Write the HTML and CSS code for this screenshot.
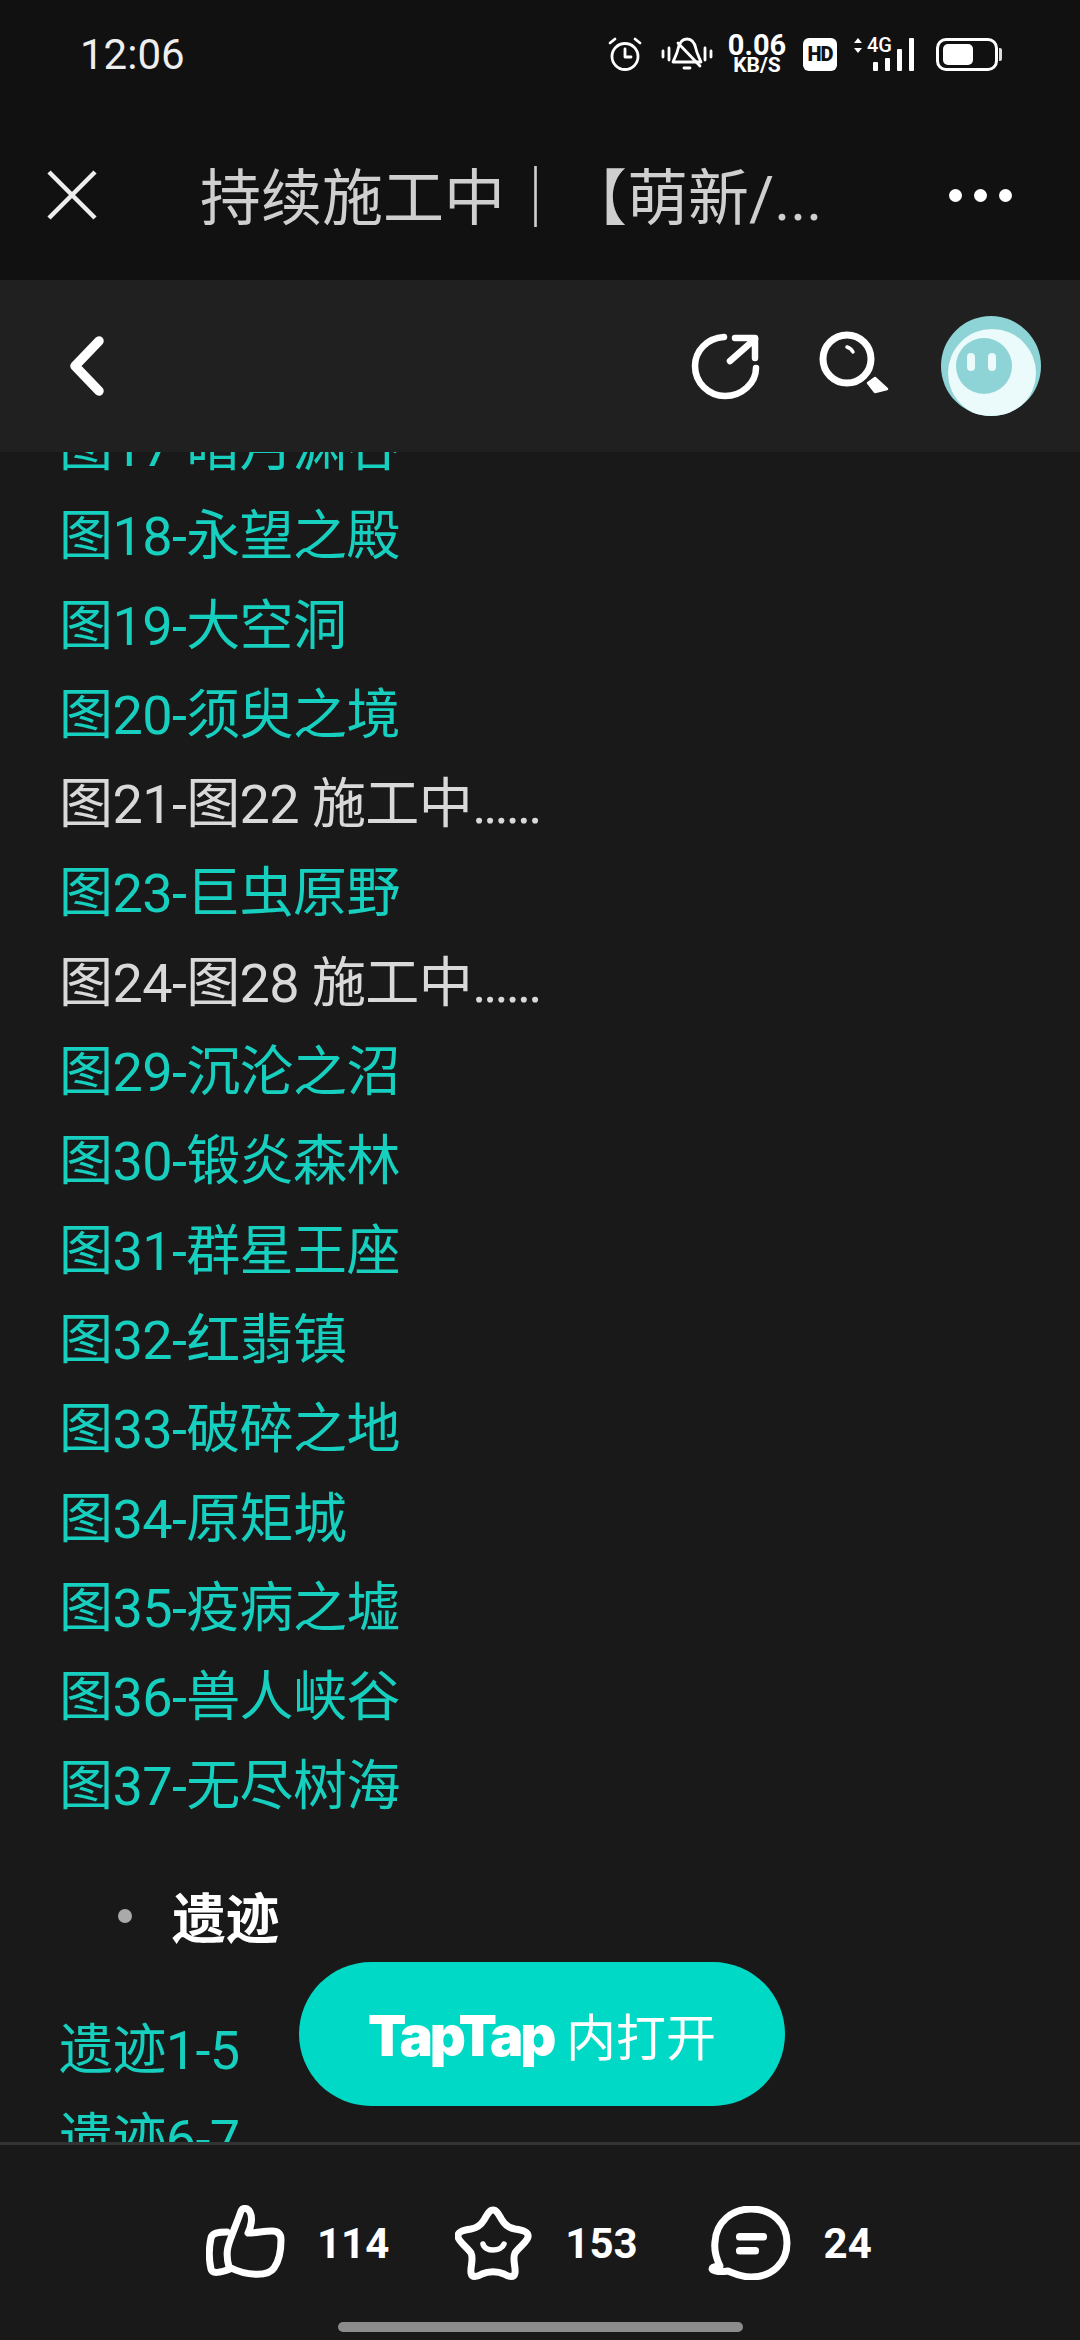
FILE: index.html
```html
<!DOCTYPE html>
<html lang="zh-CN">
<head>
    <meta charset="UTF-8">
    <meta name="viewport" content="width=device-width, initial-scale=1.0">
    <title>TapTap</title>
    <link rel="stylesheet" href="styles.css">
</head>
<body>
<div class="app">
    <header class="chrome">
        <div class="status-bar">
            <span class="clock">12:06</span>
            <div class="status-icons">
                <svg class="ic-alarm" viewBox="0 0 34 34" fill="none" stroke="#fff" stroke-width="2.8" stroke-linecap="round" stroke-linejoin="round">
                    <circle cx="17" cy="19.5" r="13"/>
                    <path d="M17 12v8h6"/>
                    <path d="M2 6l5-4M32 6l-5-4"/>
                </svg>
                <svg class="ic-bell" viewBox="0 0 52 36" fill="none" stroke="#fff" stroke-width="2.8" stroke-linecap="round" stroke-linejoin="round">
                    <path d="M26 3c-6 0-8 5-9 10-1 5-3 8-5 13h28c-2-5-4-8-5-13-1-5-3-10-9-10z"/>
                    <path d="M23 32h6"/>
                    <path d="M17 7l22 23"/>
                    <path d="M2 15v6M8 12v12M44 12v12M50 15v6"/>
                </svg>
                <div class="net-speed">
                    <span class="net-value">0.06</span>
                    <span class="net-unit">KB/S</span>
                </div>
                <span class="hd-badge">HD</span>
                <div class="signal">
                    <svg class="ic-arrows" viewBox="0 0 10 15" fill="#fff">
                        <path d="M5 0l4 5H1zM5 15l-4-5h8z"/>
                    </svg>
                    <span class="net-type">4G</span>
                    <div class="bars">
                        <i class="bar bar-1"></i>
                        <i class="bar bar-2"></i>
                        <i class="bar bar-3"></i>
                        <i class="bar bar-4"></i>
                    </div>
                </div>
                <div class="battery">
                    <div class="battery-body"><div class="battery-fill"></div></div>
                    <div class="battery-tip"></div>
                </div>
            </div>
        </div>
        <div class="title-bar">
            <svg class="ic-close" viewBox="0 0 50 50" stroke="#eee" stroke-width="4.5">
                <path d="M2 2l46 46M48 2L2 48"/>
            </svg>
            <h1 class="page-title">持续施工中｜【萌新/...</h1>
            <div class="more">
                <i class="dot"></i><i class="dot"></i><i class="dot"></i>
            </div>
        </div>
    </header>

    <nav class="sub-bar">
        <svg class="ic-back" viewBox="0 0 36 62" fill="none" stroke="#fff" stroke-width="9.5" stroke-linecap="round" stroke-linejoin="round">
            <path d="M30 6L6 31l24 25"/>
        </svg>
        <div class="sub-actions">
            <svg class="ic-share" viewBox="0 0 70 68" fill="none" stroke="#fff" stroke-width="6.5" stroke-linecap="round" stroke-linejoin="round">
                <path d="M33 5C16 6 4 19 4 34c0 17 14 30 30 30 17 0 31-13 31-28"/>
                <path d="M39 29L64 7"/>
                <path d="M44 6h20v20"/>
            </svg>
            <svg class="ic-search" viewBox="0 0 72 70" fill="none" stroke="#fff" stroke-linecap="round" stroke-linejoin="round">
                <circle cx="28" cy="28" r="24" stroke-width="7"/>
                <path d="M28 16c3 1 5 3 6 5" stroke-width="3.5"/>
                <path d="M49 52l7 9 12-3-12-11z" fill="#fff" stroke-width="2.5"/>
            </svg>
            <svg class="ic-avatar" viewBox="0 0 100 100">
                <defs>
                    <clipPath id="avatarClip"><circle cx="50" cy="50" r="50"/></clipPath>
                </defs>
                <g clip-path="url(#avatarClip)">
                    <rect width="100" height="100" fill="#8ed3d6"/>
                    <circle cx="51" cy="57" r="44" fill="#ebfafa"/>
                    <circle cx="43" cy="50" r="28" fill="#8ed3d6"/>
                    <rect x="26" y="37" width="8" height="18" rx="4" fill="#ebfafa"/>
                    <rect x="47" y="37" width="8" height="18" rx="4" fill="#ebfafa"/>
                </g>
            </svg>
        </div>
    </nav>

    <main class="content">
        <div class="scroll-inner">
            <ul class="map-list">
                <li><a href="#">图17-暗月渊谷</a></li>
                <li><a href="#">图18-永望之殿</a></li>
                <li><a href="#">图19-大空洞</a></li>
                <li><a href="#">图20-须臾之境</a></li>
                <li>图21-图22 施工中<span class="dots">......</span></li>
                <li><a href="#">图23-巨虫原野</a></li>
                <li>图24-图28 施工中<span class="dots">......</span></li>
                <li><a href="#">图29-沉沦之沼</a></li>
                <li><a href="#">图30-锻炎森林</a></li>
                <li><a href="#">图31-群星王座</a></li>
                <li><a href="#">图32-红翡镇</a></li>
                <li><a href="#">图33-破碎之地</a></li>
                <li><a href="#">图34-原矩城</a></li>
                <li><a href="#">图35-疫病之墟</a></li>
                <li><a href="#">图36-兽人峡谷</a></li>
                <li><a href="#">图37-无尽树海</a></li>
            </ul>
            <div class="section-head">
                <i class="bullet"></i>
                <strong>遗迹</strong>
            </div>
            <ul class="map-list">
                <li><a href="#">遗迹1-5</a></li>
                <li><a href="#">遗迹6-7</a></li>
            </ul>
        </div>
        <button class="open-app"><span class="brand">TapTap</span> 内打开</button>
    </main>

    <footer class="action-bar">
        <div class="stats">
            <div class="stat stat-like">
                <svg class="ic-stat" viewBox="0 0 80 76" fill="none" stroke="#fff" stroke-width="7" stroke-linecap="round" stroke-linejoin="round">
                    <path d="M23 62C19 48 22 40 26 30c3-8 7-18 9-24 2-4 7-3 9 1 3 6 1 15-2 21 8 0 16-2 24-2 6 0 9 3 9 9 0 10-2 21-7 28-6 9-28 8-45-1z"/>
                    <path d="M21 27c-9 0-15 1-16 6-2 9-2 22 0 31 1 5 9 4 19 0"/>
                </svg>
                <span class="stat-num">114</span>
            </div>
            <div class="stat stat-star">
                <svg class="ic-stat" viewBox="0 0 77 76" fill="none" stroke="#fff" stroke-width="7" stroke-linecap="round" stroke-linejoin="round">
                    <path d="M38 5c4 0 6 5 9 10s7 8 13 9c8 1 14 3 13 8s-9 10-13 16c-3 6 1 14 0 20-1 5-6 4-11 1-6-3-16-3-22 0-5 3-10 4-11-1-1-6 3-14 0-20-4-6-12-11-13-16s5-7 13-8c6-1 10-4 13-9s5-10 9-10z"/>
                    <path d="M28 39c2 8 18 8 21 0" stroke-width="5.5"/>
                </svg>
                <span class="stat-num">153</span>
            </div>
            <div class="stat stat-comment">
                <svg class="ic-stat" viewBox="0 0 83 74" fill="none" stroke="#fff" stroke-width="7" stroke-linecap="round" stroke-linejoin="round">
                    <path d="M12 60C7 50 6 44 7 36 8 16 24 3 43 3c21 0 36 14 36 34S64 71 43 71c-10 0-16-3-23-6-6 1-15 1-16-2 0-2 4-3 8-3z"/>
                    <rect x="28" y="27" width="31" height="7.5" rx="3.5" fill="#fff" stroke="none"/>
                    <rect x="28" y="41" width="23" height="7.5" rx="3.5" fill="#fff" stroke="none"/>
                </svg>
                <span class="stat-num">24</span>
            </div>
        </div>
        <div class="home-indicator"></div>
    </footer>
</div>
</body>
</html>
```

FILE: styles.css
```css
* {
    box-sizing: border-box;
}
body {
    margin: 0;
    padding: 0;
    background-color: #191919;
    font-family: Roboto, "Noto Sans CJK SC", sans-serif;
}
ul {
    list-style: none;
    margin: 0;
    padding: 0;
}
a {
    color: inherit;
    text-decoration: none;
}
svg {
    display: block;
    flex: none;
}

.app {
    width: 1080px;
    height: 2340px;
    display: flex;
    flex-direction: column;
    overflow: hidden;
}

/* top chrome */
.chrome {
    height: 280px;
    background-color: #111;
    color: #fff;
}
.status-bar {
    height: 110px;
    display: flex;
    align-items: center;
    justify-content: space-between;
    padding: 0 78px 2px 80px;
}
.clock {
    font-size: 42px;
    color: #eee;
}
.status-icons {
    display: flex;
    align-items: center;
}
.ic-alarm {
    width: 34px;
    height: 34px;
    margin-right: 19px;
}
.ic-bell {
    width: 52px;
    height: 36px;
    margin-right: 12px;
}
.net-speed {
    width: 64px;
    display: flex;
    flex-direction: column;
    align-items: center;
    color: #fff;
    font-weight: 700;
    margin-right: 14px;
}
.net-value {
    font-size: 29px;
    line-height: 23px;
}
.net-unit {
    font-size: 21px;
    line-height: 17px;
}
.hd-badge {
    width: 34px;
    height: 33px;
    background-color: #fff;
    border-radius: 6px;
    color: #111;
    font-size: 20px;
    font-weight: 900;
    line-height: 33px;
    text-align: center;
    letter-spacing: -1px;
    margin-right: 16px;
}
.signal {
    width: 62px;
    height: 34px;
    display: flex;
    align-items: flex-start;
    position: relative;
    margin-right: 21px;
}
.ic-arrows {
    width: 10px;
    height: 15px;
    margin-top: 1px;
}
.net-type {
    font-size: 20px;
    line-height: 17px;
    font-weight: 500;
    margin-left: 4px;
}
.bars {
    position: absolute;
    left: 20px;
    bottom: 0;
    display: flex;
    align-items: flex-end;
    gap: 7px;
}
.bar {
    width: 5px;
    background-color: #fff;
    border-radius: 1px;
}
.bar-1 { height: 9px; }
.bar-2 { height: 13px; }
.bar-3 { height: 22px; }
.bar-4 { height: 33px; }
.battery {
    display: flex;
    align-items: center;
}
.battery-body {
    width: 62px;
    height: 33px;
    border: 3px solid #fff;
    border-radius: 10px;
    padding: 3px 4px;
}
.battery-fill {
    width: 30px;
    height: 100%;
    background-color: #fff;
    border-radius: 5px;
}
.battery-tip {
    width: 3px;
    height: 13px;
    margin-left: 1px;
    background-color: #ddd;
    border-radius: 0 2px 2px 0;
}

.title-bar {
    height: 170px;
    display: flex;
    align-items: center;
    padding: 0 68px 0 47px;
}
.ic-close {
    width: 50px;
    height: 50px;
}
.page-title {
    flex: 1;
    margin: 0 0 3px 103px;
    font-size: 61px;
    font-weight: 400;
    color: #cfcfcf;
    white-space: nowrap;
}
.more {
    display: flex;
    gap: 12px;
}
.dot {
    width: 13px;
    height: 13px;
    border-radius: 50%;
    background-color: #fff;
}

/* sub header */
.sub-bar {
    height: 172px;
    flex: none;
    display: flex;
    align-items: center;
    justify-content: space-between;
    padding: 0 39px 0 69px;
    background-color: #202020;
}
.ic-back {
    width: 36px;
    height: 62px;
}
.sub-actions {
    display: flex;
    align-items: center;
}
.ic-share {
    width: 70px;
    height: 68px;
    margin-right: 58px;
}
.ic-search {
    width: 72px;
    height: 70px;
    margin-right: 50px;
}
.ic-avatar {
    width: 100px;
    height: 100px;
}

/* article */
.content {
    flex: 1;
    position: relative;
    overflow: hidden;
    background-color: #191919;
}
.scroll-inner {
    margin-top: -49px;
    padding-left: 59px;
    font-size: 54px;
    letter-spacing: -0.6px;
    color: #d9d9d9;
}
.map-list li {
    height: 89.3px;
    line-height: 89.3px;
    white-space: nowrap;
}
.map-list a {
    color: #17cfbf;
}
.dots {
    letter-spacing: -3px;
}
.section-head {
    height: 174px;
    display: flex;
    align-items: center;
    margin-left: 59px;
    padding-bottom: 6px;
    color: #fff;
}
.section-head strong {
    font-weight: 700;
}
.bullet {
    width: 14px;
    height: 14px;
    border-radius: 50%;
    background-color: #aaa;
    margin-right: 40px;
}
.open-app {
    position: absolute;
    left: 299px;
    top: 1510px;
    width: 486px;
    height: 144px;
    border: none;
    border-radius: 72px;
    background-color: #00d9c5;
    color: #fff;
    font-family: Roboto, "Noto Sans CJK SC", sans-serif;
    font-size: 50px;
    padding: 0;
    cursor: pointer;
}
.brand {
    font-family: Inter, sans-serif;
    font-size: 56px;
    font-weight: 900;
    letter-spacing: -3px;
}

/* bottom bar */
.action-bar {
    height: 198px;
    flex: none;
    border-top: 3px solid #333;
    background-color: #191919;
    padding-top: 60px;
}
.stats {
    display: flex;
    padding-left: 206px;
    gap: 64px;
}
.stat {
    display: flex;
    align-items: center;
    gap: 33px;
}
.stat-like {
    gap: 31px;
    margin-right: 2px;
}
.stat-like .ic-stat {
    width: 80px;
    height: 76px;
}
.stat-star .ic-stat {
    width: 77px;
    height: 76px;
}
.stat-comment {
    margin-left: 6px;
}
.stat-comment .ic-stat {
    width: 83px;
    height: 74px;
}
.stat-num {
    font-size: 42px;
    font-weight: 700;
    color: #fff;
}
.home-indicator {
    width: 405px;
    height: 10px;
    margin: 41px auto 0;
    border-radius: 5px;
    background-color: #8c8c8c;
}
```
